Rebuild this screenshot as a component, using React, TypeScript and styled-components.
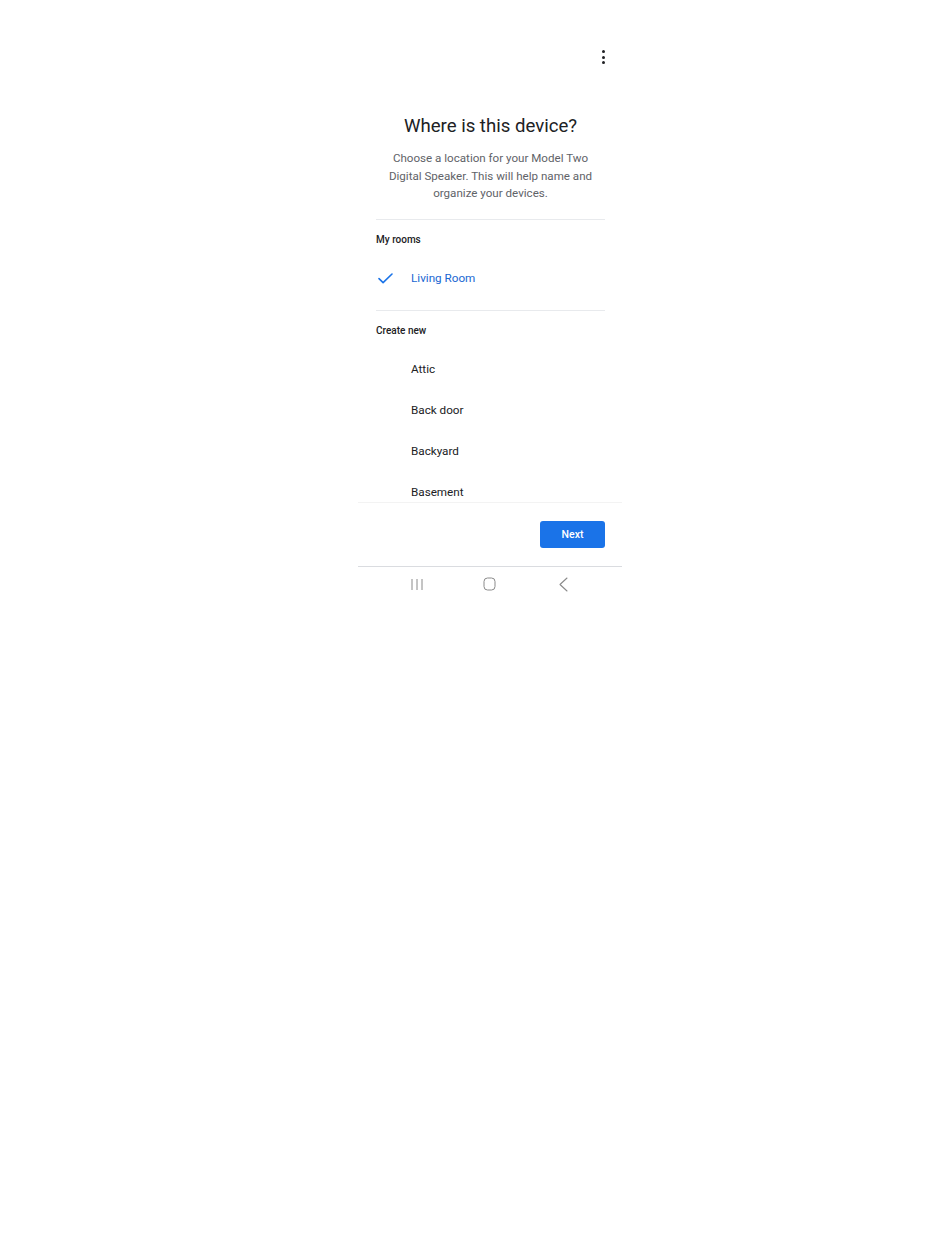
import React from 'react'
import styled, { createGlobalStyle } from 'styled-components'

const GlobalStyle = createGlobalStyle`
    html, body {
        margin: 0;
        padding: 0;
        background: #ffffff;
    }
    body {
        font-family: Roboto, 'Noto Sans', Arial, sans-serif;
        color: #202124;
    }
`

const Page = styled.div`
    width: 950px;
    height: 1260px;
    padding-left: 358px;
    padding-top: 37px;
    box-sizing: border-box;
`

const Phone = styled.div`
    width: 264px;
    display: flex;
    flex-direction: column;
`

const TopBar = styled.div`
    height: 40px;
    display: flex;
    justify-content: flex-end;
    align-items: center;
    padding-right: 17px;
`

const MoreButton = styled.div`
    display: flex;
    flex-direction: column;
    gap: 2.5px;
    align-items: center;
    width: 3px;
`

const Dot = styled.span`
    width: 3px;
    height: 3px;
    border-radius: 50%;
    background: #202124;
`

const Scroller = styled.div`
    height: 425px;
    overflow: hidden;
    padding: 0 17px 0 18px;
`

const Title = styled.h1`
    margin: 37px 0 0;
    font-size: 18.6px;
    line-height: 24px;
    font-weight: 400;
    text-align: center;
    color: #202124;
`

const Subtitle = styled.p`
    margin: 12px 0 0;
    font-size: 11.6px;
    line-height: 17.5px;
    text-align: center;
    color: #5f6368;
`

const Divider = styled.div<{ top: number }>`
    height: 1px;
    background: #e8eaed;
    margin-top: ${props => props.top}px;
`

const SectionLabel = styled.div`
    margin-top: 13px;
    font-size: 10px;
    line-height: 14px;
    font-weight: 500;
    color: #202124;
`

const RoomList = styled.div<{ top: number }>`
    margin-top: ${props => props.top}px;
    display: flex;
    flex-direction: column;
`

const Room = styled.div<{ selected?: boolean }>`
    height: 41px;
    display: grid;
    grid-template-columns: 35px 1fr;
    align-items: center;
    font-size: 11.7px;
    color: ${props => props.selected ? '#1967d2' : '#202124'};
`

const CheckSlot = styled.div`
    display: flex;
    align-items: center;
    padding-left: 2px;
`

const BottomBar = styled.div`
    border-top: 1px solid #f3f3f3;
    border-bottom: 1px solid #dadce0;
    height: 65px;
    box-sizing: border-box;
    display: flex;
    justify-content: flex-end;
    align-items: flex-start;
    padding: 18px 17px 0 0;
`

const NextButton = styled.button`
    width: 65px;
    height: 27px;
    border: none;
    border-radius: 3px;
    background: #1a73e8;
    color: #ffffff;
    font-family: Roboto, Arial, sans-serif;
    font-size: 10.5px;
    font-weight: 500;
    cursor: pointer;
`

const NavBar = styled.div`
    height: 34px;
    display: grid;
    grid-template-columns: repeat(3, 1fr);
    align-items: center;
    padding: 0 22px;
`

const NavItem = styled.div`
    display: flex;
    justify-content: center;
    align-items: center;
`

const Check = () => (
    <svg width="15" height="11" viewBox="0 0 15 11" fill="none">
        <path d="M1 5.6 L5.1 9.6 L14 1" stroke="#1a73e8" strokeWidth="1.6" strokeLinecap="round" strokeLinejoin="round" />
    </svg>
)

const RecentsIcon = () => (
    <svg width="12" height="13" viewBox="0 0 12 13" fill="none">
        <path d="M1 1 V12 M6 1 V12 M11 1 V12" stroke="#8a8a8a" strokeWidth="1" />
    </svg>
)

const HomeIcon = () => (
    <svg width="13" height="14" viewBox="0 0 13 14" fill="none">
        <rect x="1" y="1" width="11" height="12" rx="3.5" stroke="#8a8a8a" strokeWidth="1" />
    </svg>
)

const BackIcon = () => (
    <svg width="12" height="15" viewBox="0 0 12 15" fill="none">
        <path d="M10 1 L3 7.5 L10 14" stroke="#8a8a8a" strokeWidth="1.1" strokeLinecap="round" strokeLinejoin="round" />
    </svg>
)

const newRooms = ['Attic', 'Back door', 'Backyard', 'Basement']

const App = () => {
    return (
        <Page>
            <GlobalStyle />
            <Phone>
                <TopBar>
                    <MoreButton>
                        <Dot />
                        <Dot />
                        <Dot />
                    </MoreButton>
                </TopBar>
                <Scroller>
                    <Title>Where is this device?</Title>
                    <Subtitle>
                        Choose a location for your Model Two<br />
                        Digital Speaker. This will help name and<br />
                        organize your devices.
                    </Subtitle>
                    <Divider top={16} />
                    <SectionLabel>My rooms</SectionLabel>
                    <RoomList top={11}>
                        <Room selected>
                            <CheckSlot><Check /></CheckSlot>
                            <span>Living Room</span>
                        </Room>
                    </RoomList>
                    <Divider top={11} />
                    <SectionLabel>Create new</SectionLabel>
                    <RoomList top={11}>
                        {newRooms.map(name => (
                            <Room key={name}>
                                <span />
                                <span>{name}</span>
                            </Room>
                        ))}
                    </RoomList>
                </Scroller>
                <BottomBar>
                    <NextButton>Next</NextButton>
                </BottomBar>
                <NavBar>
                    <NavItem><RecentsIcon /></NavItem>
                    <NavItem><HomeIcon /></NavItem>
                    <NavItem><BackIcon /></NavItem>
                </NavBar>
            </Phone>
        </Page>
    )
}

export default App
